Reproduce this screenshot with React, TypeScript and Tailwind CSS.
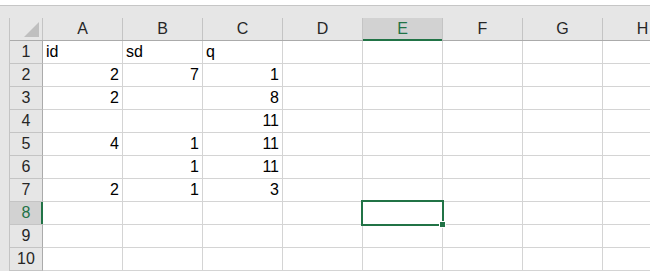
const cols = ["A", "B", "C", "D", "E", "F", "G", "H"];

const data: (string | number | null)[][] = [
  ["id", "sd", "q"],
  [2, 7, 1],
  [2, null, 8],
  [null, null, 11],
  [4, 1, 11],
  [null, 1, 11],
  [2, 1, 3],
  [],
  [],
  [],
];

const SEL_COL = 4;
const SEL_ROW = 7;

function ColHeader({ label, active }: { label: string; active: boolean }) {
  return (
    <div
      className={`relative flex h-[22px] w-[80px] shrink-0 items-center justify-center border-r border-[#c4c4c4] text-[16px] ${
        active ? "bg-[#d2d2d2] text-[#217346]" : "text-[#262626]"
      }`}
    >
      {label}
      {active && <div className="absolute -bottom-px left-0 right-0 h-[2px] bg-[#217346]" />}
    </div>
  );
}

function RowHeader({ n, active }: { n: number; active: boolean }) {
  return (
    <div
      className={`relative flex h-[23px] w-[33px] shrink-0 items-center justify-center border-b border-r border-b-[#c4c4c4] border-r-[#ababab] text-[16px] ${
        active ? "bg-[#d2d2d2] text-[#217346]" : "bg-[#e6e6e6] text-[#262626]"
      }`}
    >
      {n}
      {active && <div className="absolute -right-px top-0 bottom-0 w-[2px] bg-[#217346]" />}
    </div>
  );
}

function Cell({ value, selected }: { value: string | number | null | undefined; selected: boolean }) {
  const isNum = typeof value === "number";
  return (
    <div
      className={`relative flex h-[23px] w-[80px] shrink-0 items-center border-b border-r border-[#d4d4d4] px-[3px] text-[16px] text-black ${
        isNum ? "justify-end" : "justify-start"
      } ${selected ? "z-10" : ""}`}
    >
      {value ?? ""}
      {selected && (
        <>
          <div className="absolute -left-[2px] -top-[2px] h-[26px] w-[83px] border-2 border-[#217346]" />
          <div className="absolute -bottom-[4px] -right-[4px] h-[7px] w-[7px] border border-white bg-[#217346]" />
        </>
      )}
    </div>
  );
}

export default function App() {
  return (
    <div
      className="h-[274px] w-[650px] overflow-hidden bg-white"
      style={{ fontFamily: '"Liberation Sans", Arial, sans-serif' }}
    >
      <div className="h-[5px] bg-white" />
      <div className="h-px bg-[#c6c6c6]" />
      <div className="h-[12px] bg-[#e6e6e6]" />
      <div className="flex">
        <div className="w-[10px] shrink-0 border-r border-[#c4c4c4] bg-[#e6e6e6]" />
        <div className="flex flex-col">
          <div className="flex border-b border-[#ababab] bg-[#e6e6e6]">
            <div className="relative h-[22px] w-[33px] shrink-0 border-r border-[#c4c4c4]">
              <svg className="absolute bottom-[3px] right-[3px]" width="15" height="15" viewBox="0 0 15 15">
                <polygon points="15,0 15,15 0,15" fill="#bfbfbf" />
              </svg>
            </div>
            {cols.map((c, i) => (
              <ColHeader key={c} label={c} active={i === SEL_COL} />
            ))}
          </div>
          {data.map((row, r) => (
            <div key={r} className="flex">
              <RowHeader n={r + 1} active={r === SEL_ROW} />
              {cols.map((c, ci) => (
                <Cell key={c} value={row[ci]} selected={r === SEL_ROW && ci === SEL_COL} />
              ))}
            </div>
          ))}
        </div>
      </div>
    </div>
  );
}
